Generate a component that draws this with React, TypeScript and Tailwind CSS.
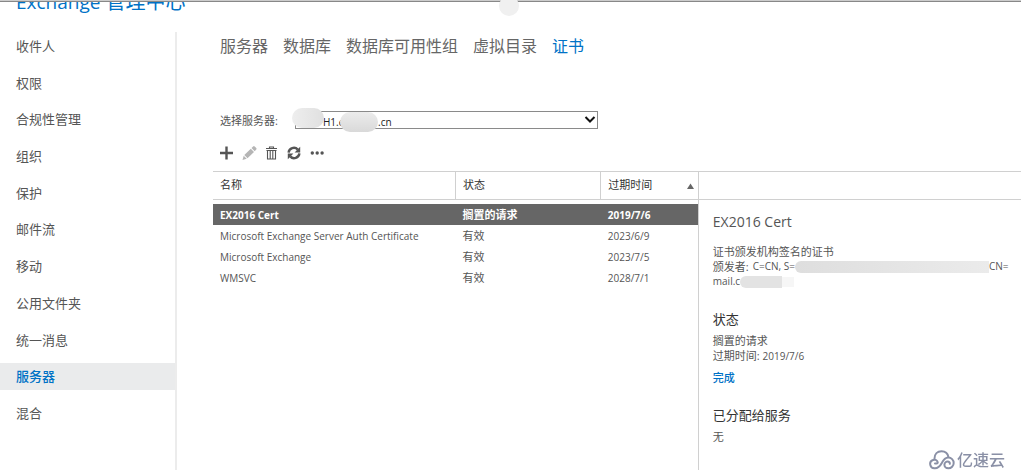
import React from 'react';

interface Certificate {
  name: string;
  status: string;
  expires: string;
}

const navItems = [
  '收件人',
  '权限',
  '合规性管理',
  '组织',
  '保护',
  '邮件流',
  '移动',
  '公用文件夹',
  '统一消息',
  '服务器',
  '混合',
];

const tabs = ['服务器', '数据库', '数据库可用性组', '虚拟目录', '证书'];

const certificates: Certificate[] = [
  { name: 'EX2016 Cert', status: '搁置的请求', expires: '2019/7/6' },
  { name: 'Microsoft Exchange Server Auth Certificate', status: '有效', expires: '2023/6/9' },
  { name: 'Microsoft Exchange', status: '有效', expires: '2023/7/5' },
  { name: 'WMSVC', status: '有效', expires: '2028/7/1' },
];

const Sidebar: React.FC = () => (
  <nav className="w-[177px] shrink-0 mt-8 mb-0.5 pt-px pb-[43px] border-r-2 border-[#ececec]">
    <ul className="h-full flex flex-col justify-between">
      {navItems.map((item) => (
        <li key={item}>
          <a
            href="#"
            className={`block pl-4 text-[13px] leading-[27px] ${
              item === '服务器' ? 'bg-[#eaebec] text-[#0072c6] font-medium' : 'text-[#555]'
            }`}
          >
            {item}
          </a>
        </li>
      ))}
    </ul>
  </nav>
);

const Tabs: React.FC = () => (
  <div className="flex gap-[15px] pl-[7px] text-base leading-6">
    {tabs.map((tab) => (
      <a key={tab} href="#" className={tab === '证书' ? 'text-[#0072c6]' : 'text-[#666]'}>
        {tab}
      </a>
    ))}
  </div>
);

const ServerPicker: React.FC = () => (
  <div className="flex items-center pl-[7px]">
    <label htmlFor="server" className="w-[75px] pt-0.5 leading-4 text-[#555]">
      选择服务器:
    </label>
    <div className="relative">
      <select
        id="server"
        className="block appearance-none w-[303px] h-[18px] pl-[27px] pt-0.5 border border-[#8a8a8a] bg-white text-[10px] leading-4 text-[#222]"
      >
        <option>{'H1.e\u00a0\u00a0\u00a0\u00a0\u00a0\u00a0\u00a0\u00a0\u00a0\u00a0\u00a0\u00a0\u00a0.cn'}</option>
      </select>
      <svg className="absolute right-0.5 top-1 pointer-events-none" width="12" height="9" viewBox="0 0 12 9">
        <path d="M1.5 2 L6 6.5 L10.5 2" fill="none" stroke="#111" strokeWidth="2" />
      </svg>
      {/* Redacted parts of the host name */}
      <span className="absolute -left-[3px] -top-[3px] w-8 h-5 rounded-full bg-gradient-to-r from-[#eee] to-[#e0e0e0]" />
      <span className="absolute left-[45px] top-px w-[38px] h-5 rounded-full bg-gradient-to-b from-[#ececec] to-[#d9d9d9]" />
    </div>
  </div>
);

const Toolbar: React.FC = () => (
  <div className="flex items-center gap-2 pl-[6px] text-[#555]">
    <button aria-label="新建">
      <svg className="block" width="15" height="16" viewBox="0 0 15 16">
        <path d="M7.5 1.5v13M1 8h13" stroke="currentColor" strokeWidth="2.4" />
      </svg>
    </button>
    <button aria-label="编辑" className="text-[#b5b5b5]">
      <svg className="block" width="15" height="16" viewBox="0 0 15 16">
        <path d="M0.5 15l1.2-4.2 3 3zM2.3 10.1l6.5-6.4 3.2 3.2-6.5 6.4zM9.5 3l1.6-1.6q.8-.7 1.6 0l1.5 1.5q.8.8 0 1.6l-1.5 1.7z" fill="currentColor" />
      </svg>
    </button>
    <button aria-label="删除">
      <svg className="block" width="13" height="16" viewBox="0 0 13 16">
        <path d="M4.5 3.5V2h4v1.5M1 3.5h11M2.5 5.5V14h8V5.5M5.2 6v8M7.8 6v8M1.5 5.5h10" fill="none" stroke="currentColor" strokeWidth="1.1" />
      </svg>
    </button>
    <button aria-label="刷新">
      <svg className="block" width="16" height="16" viewBox="0 0 16 16">
        <path d="M2.6 7.6A5.3 5.3 0 0 1 11.8 4.6M13.4 8.4A5.3 5.3 0 0 1 4.2 11.4" fill="none" stroke="currentColor" strokeWidth="2.4" />
        <path d="M14.2 1.8v5.6H8.6zM1.8 14.2V8.6h5.6z" fill="currentColor" />
      </svg>
    </button>
    <button aria-label="更多">
      <svg className="block" width="15" height="16" viewBox="0 0 15 16">
        <g fill="currentColor">
          <circle cx="2.3" cy="8" r="1.7" />
          <circle cx="7.2" cy="8" r="1.7" />
          <circle cx="12.1" cy="8" r="1.7" />
        </g>
      </svg>
    </button>
  </div>
);

const CertificateTable: React.FC = () => (
  <table className="w-full table-fixed border-collapse text-left">
    <thead>
      <tr className="h-7 text-[#333] border-y border-[#d0d0d0]">
        <th className="w-[50%] pl-[7px] font-normal">名称</th>
        <th className="w-[30%] pl-[7px] font-normal border-l border-[#d0d0d0]">状态</th>
        <th className="w-[20%] pl-[7px] font-normal border-l border-[#d0d0d0]">
          <div className="flex items-center justify-between pr-1">
            过期时间
            <svg width="7" height="6" viewBox="0 0 7 6">
              <path d="M3.5 0.5L7 6H0z" fill="#666" />
            </svg>
          </div>
        </th>
      </tr>
    </thead>
    <tbody className="before:block before:h-1">
      {certificates.map((cert, i) => (
        <tr key={cert.name} className={`h-[21px] leading-4 ${i === 0 ? 'bg-[#666] text-white font-bold' : 'text-[#555]'}`}>
          <td className="pl-[7px] text-[10px] whitespace-nowrap">{cert.name}</td>
          <td className="pl-[7px]">{cert.status}</td>
          <td className="pl-[7px] text-[10px]">{cert.expires}</td>
        </tr>
      ))}
    </tbody>
  </table>
);

const Details: React.FC = () => (
  <aside className="border-l border-[#d0d0d0] text-[#555] leading-[15px]">
    <div className="h-[29px] border-y border-[#d0d0d0]" />
    <div className="pl-[14px] pt-3">
      <h2 className="text-sm leading-5">EX2016 Cert</h2>
      <p className="mt-3">证书颁发机构签名的证书</p>
      <p className="flex items-center whitespace-nowrap">
        颁发者:
        <span className="ml-1 text-[10px]">C=CN, S=</span>
        <span className="w-[194px] h-3 rounded-l-full bg-gradient-to-r from-[#dedede] to-[#ebebeb]" />
        <span className="text-[10px]">CN=</span>
      </p>
      <p className="flex items-center">
        <span className="text-[10px]">mail.c</span>
        <span className="w-[42px] h-3 rounded-l-full bg-[#e3e3e3]" />
        <span className="w-3 h-2.5 bg-[#f6f6f6]" />
      </p>

      <h3 className="mt-5 text-[13px] leading-5 text-[#333]">状态</h3>
      <p className="mt-1">搁置的请求</p>
      <p>
        过期时间: <span className="text-[10px]">2019/7/6</span>
      </p>
      <a href="#" className="inline-block mt-1.5 text-[#0072c6] font-medium">
        完成
      </a>

      <h3 className="mt-5 text-[13px] leading-5 text-[#333]">已分配给服务</h3>
      <p className="mt-1">无</p>
    </div>
  </aside>
);

const Watermark: React.FC = () => (
  <div className="fixed right-4 bottom-0 flex items-center gap-0.5 text-[#8a90a6] text-base leading-6 font-medium">
    <svg width="26" height="20" viewBox="0 0 26 20" fill="none" stroke="currentColor" strokeWidth="2" strokeLinecap="round">
      <path d="M5.5 8.5C5.5 4 8.5 1.2 12.5 1.2c3.5 0 6.3 2.3 6.9 5.8" />
      <path d="M6 13.5h1.5c1 0 1.5-.8 1-1.8C7.8 10 5.8 9.2 4 10a4.3 4.3 0 0 0 2 8.3c3.5 0 5-2 6.8-5.3 1.5-3 3.2-5.5 6.5-5.5a5.4 5.4 0 0 1 0 10.8c-2.3 0-3.9-1.6-3.9-3.5s1.6-3.2 3.2-3.2 2.4 1 2.2 2.2" />
    </svg>
    亿速云
  </div>
);

const App: React.FC = () => (
  <div className="relative h-screen overflow-hidden flex bg-white text-[11px] font-['Open_Sans','Noto_Sans_CJK_SC',sans-serif]">
    <div className="absolute inset-x-0 top-0 h-0.5 bg-[#ccc] border-b border-[#888] z-10" />
    <span className="absolute left-[499px] -top-1 size-5 rounded-full bg-[#f0f0f0] z-10" />
    <h1 className="absolute left-4 -top-3 text-[19px] leading-7 text-[#0072c6] whitespace-nowrap">
      Exchange <span className="text-xl leading-7">管理中心</span>
    </h1>

    <Sidebar />
    <main className="flex-1 min-w-0 pl-9 pt-[34px] flex flex-col">
      <Tabs />
      <div className="mt-[53px]">
        <ServerPicker />
      </div>
      <div className="mt-4">
        <Toolbar />
      </div>
      <div className="mt-[10px] mb-0.5 flex-1 grid grid-cols-[3fr_2fr]">
        <div>
          <CertificateTable />
        </div>
        <Details />
      </div>
    </main>
    <Watermark />
  </div>
);

export default App;
